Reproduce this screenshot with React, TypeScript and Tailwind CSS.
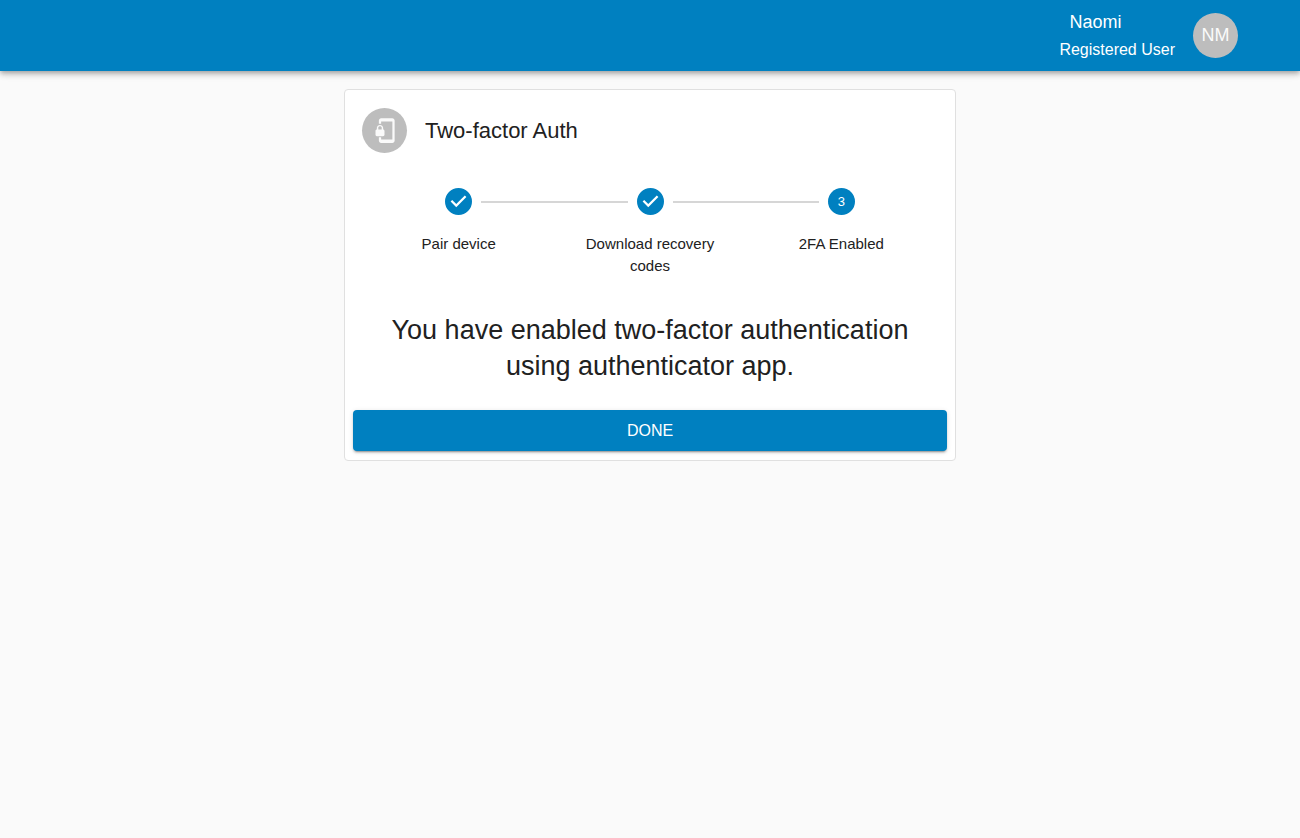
import { MdPhonelinkLock } from 'react-icons/md'
import clsx from 'clsx'

const steps = ['Pair device', 'Download recovery codes', '2FA Enabled']
const activeStep = 2

function StepIcon({ index }: { index: number }) {
  if (index < activeStep) {
    return (
      <svg viewBox="0 0 24 24" className="size-[27px] shrink-0 fill-[#0080c0]" role="img" aria-label="Completed">
        <path d="M12 0a12 12 0 1 0 0 24 12 12 0 0 0 0-24zm-2 17l-5-5 1.4-1.4 3.6 3.6 7.6-7.6L19 8l-9 9z" />
      </svg>
    )
  }
  return (
    <span className="size-[27px] shrink-0 rounded-full bg-[#0080c0] text-white text-[13px] flex items-center justify-center">
      {index + 1}
    </span>
  )
}

function Stepper() {
  return (
    <ol className="grid grid-cols-3 px-[18px] pt-[17px]">
      {steps.map((label, i) => (
        <li key={label} aria-current={i === activeStep ? 'step' : undefined}>
          <div className="flex items-center gap-[9px]">
            <span className={clsx('h-[2px] flex-1', i > 0 && 'bg-[#d6d6d6]')} />
            <StepIcon index={i} />
            <span className={clsx('h-[2px] flex-1', i < steps.length - 1 && 'bg-[#d6d6d6]')} />
          </div>
          <p className="mt-[18px] px-[18px] text-center text-[15px] leading-[22px]">{label}</p>
        </li>
      ))}
    </ol>
  )
}

function App() {
  return (
    <div className="min-h-screen bg-[#fafafa] text-[#212121] font-['Liberation_Sans',Arial,sans-serif]">

      {/* App bar */}
      <header className="bg-[#0080c0] text-white py-2 pr-[62px] pl-6 flex items-center justify-end gap-[18px] shadow-[0_2px_4px_-1px_rgba(0,0,0,0.2),0_4px_5px_0_rgba(0,0,0,0.14),0_1px_10px_0_rgba(0,0,0,0.12)]">
        <div>
          <p className="pl-2.5 text-[18px] leading-[28px]">Naomi</p>
          <p className="text-[16px] leading-[27px]">Registered User</p>
        </div>
        <span className="size-[45px] rounded-full bg-[#bdbdbd] text-[#fafafa] text-[18px] flex items-center justify-center">
          NM
        </span>
      </header>

      <main className="px-4 pt-[18px]">
        <section className="mx-auto w-full max-w-[612px] bg-white border border-[#e0e0e0] rounded">

          {/* Card header */}
          <div className="flex items-center gap-[18px] px-[17px] py-[18px]">
            <span className="size-[45px] rounded-full bg-[#bdbdbd] text-[#fafafa] flex items-center justify-center">
              <MdPhonelinkLock className="size-[27px]" />
            </span>
            <h1 className="text-[22px] leading-[32px]">Two-factor Auth</h1>
          </div>

          <Stepper />

          <h2 className="mt-[35px] px-9 text-center text-[27px] leading-[36px]">
            You have enabled two-factor authentication using authenticator app.
          </h2>

          <div className="px-2 pt-[26px] pb-[9px]">
            <button
              type="button"
              className="block w-full h-[41px] rounded bg-[#0080c0] hover:bg-[#005986] text-white text-[16px] uppercase transition-colors shadow-[0_3px_1px_-2px_rgba(0,0,0,0.2),0_2px_2px_0_rgba(0,0,0,0.14),0_1px_5px_0_rgba(0,0,0,0.12)]"
            >
              Done
            </button>
          </div>

        </section>
      </main>

    </div>
  )
}

export default App
